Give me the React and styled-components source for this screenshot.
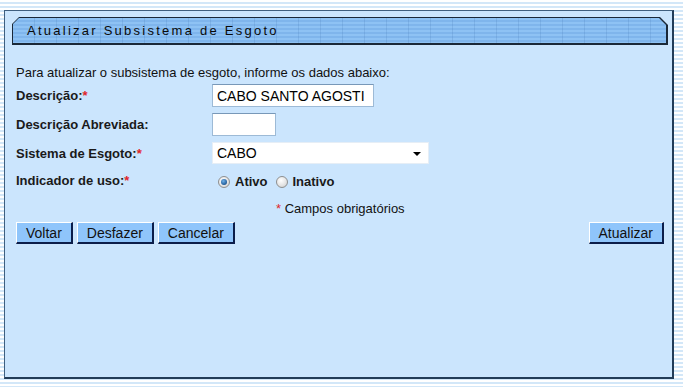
import React, { useState } from 'react';
import styled, { createGlobalStyle } from 'styled-components';

const Global = createGlobalStyle`
  html, body {
    margin: 0;
    padding: 0;
  }
  body {
    font-family: "Liberation Sans", Arial, sans-serif;
    background: repeating-linear-gradient(
      to bottom,
      #ffffff 0px,
      #ffffff 2px,
      #d3e7f8 2px,
      #d3e7f8 4px
    );
    min-height: 387px;
  }
`;

const Page = styled.div`
  padding: 10px 9px 8px 4px;
`;

const Panel = styled.div`
  box-sizing: border-box;
  height: 369px;
  background: #cbe5fd;
  border: 1px solid #3f5f7f;
  border-right: 2px solid #223c58;
  border-bottom: 2px solid #223c58;
  padding: 6px 4px 0 7px;
`;

const TitleFrame = styled.div`
  background: #1a2838;
  padding: 1px 2px 2px 1px;
  clip-path: polygon(7px 0, calc(100% - 8px) 0, 100% 8px, 100% 100%, 0 100%, 0 7px);
`;

const TitleBar = styled.div`
  height: 25px;
  display: flex;
  align-items: center;
  padding-left: 14px;
  font-size: 13px;
  letter-spacing: 2.25px;
  color: #0a0a0a;
  clip-path: polygon(6px 0, calc(100% - 7px) 0, 100% 7px, 100% 100%, 0 100%, 0 6px);
  background:
    repeating-linear-gradient(
      to right,
      transparent 0px,
      transparent 21px,
      rgba(60, 110, 170, 0.18) 21px,
      rgba(60, 110, 170, 0.18) 22px
    ),
    repeating-linear-gradient(
      to bottom,
      #8ec2f4 0px,
      #8ec2f4 2px,
      #7fb5ec 2px,
      #7fb5ec 4px
    );
`;

const Body = styled.div`
  padding: 20px 4px 0 4px;
  font-size: 13px;
  color: #111;
`;

const Intro = styled.div`
  line-height: 15px;
  margin-bottom: 4px;
`;

const Form = styled.div`
  display: grid;
  grid-template-columns: 196px 1fr;
  row-gap: 6px;
  align-items: center;
`;

const Label = styled.div`
  font-weight: bold;
  color: #1a1a1a;
  align-self: ${p => (p.top ? 'start' : 'center')};
  padding-top: ${p => (p.top ? '3px' : '0')};
`;

const Req = styled.span`
  color: #e0262a;
`;

const TextInput = styled.input`
  box-sizing: border-box;
  width: ${p => p.w}px;
  height: 23px;
  border: 1px solid #9dbad6;
  border-top-color: #7898b8;
  background: #fff;
  font-family: "Liberation Sans", Arial, sans-serif;
  font-size: 14px;
  color: #000;
  padding: 0 4px;
  outline: none;
`;

const Select = styled.div`
  box-sizing: border-box;
  width: 217px;
  height: 22px;
  background: #fff;
  border: 1px solid #e6eef6;
  display: flex;
  align-items: center;
  padding: 0 7px 0 4px;
  font-size: 14px;
  color: #000;
`;

const SelectText = styled.span`
  flex: 1;
`;

const Arrow = styled.span`
  width: 0;
  height: 0;
  border-left: 4px solid transparent;
  border-right: 4px solid transparent;
  border-top: 4px solid #000;
  margin-top: 2px;
`;

const RadioRow = styled.div`
  display: flex;
  align-items: center;
  padding: 4px 0 0 6px;
  font-size: 13px;
  font-weight: bold;
  color: #1a1a1a;
`;

const RadioOption = styled.label`
  display: flex;
  align-items: center;
  margin-right: 8px;
  cursor: pointer;
`;

const RadioDot = styled.span`
  box-sizing: border-box;
  width: 12px;
  height: 12px;
  border-radius: 50%;
  border: 1px solid #8e8f8f;
  background: radial-gradient(circle at 40% 35%, #ffffff 0%, #e2e2e2 60%, #c6c6c6 100%);
  margin-right: 5px;
  display: flex;
  align-items: center;
  justify-content: center;
  &::after {
    content: '';
    display: ${p => (p.on ? 'block' : 'none')};
    width: 6px;
    height: 6px;
    border-radius: 50%;
    background: radial-gradient(circle at 40% 35%, #6fb0e8 0%, #1f5b98 70%, #0f3566 100%);
  }
`;

const Note = styled.div`
  padding: 12px 0 0 260px;
  line-height: 15px;
`;

const Actions = styled.div`
  display: flex;
  gap: 4px;
  margin-top: 6px;
`;

const Button = styled.button`
  box-sizing: border-box;
  height: 22px;
  padding: 0 ${p => p.px || 9}px;
  background: #8fc5fb;
  border: 1px solid #fff;
  border-right: 2px solid #0b1d4a;
  border-bottom: 2px solid #0b1d4a;
  font-family: "Liberation Sans", Arial, sans-serif;
  font-size: 14px;
  color: #111;
  cursor: pointer;
  margin-left: ${p => (p.push ? 'auto' : '0')};
`;

export default function App() {
  const [uso, setUso] = useState('ativo');
  return (
    <>
      <Global />
      <Page>
        <Panel>
          <TitleFrame>
            <TitleBar>Atualizar Subsistema de Esgoto</TitleBar>
          </TitleFrame>
          <Body>
            <Intro>Para atualizar o subsistema de esgoto, informe os dados abaixo:</Intro>
            <Form>
              <Label>Descrição:<Req>*</Req></Label>
              <TextInput w={162} defaultValue="CABO SANTO AGOSTI" />
              <Label>Descrição Abreviada:</Label>
              <TextInput w={64} defaultValue="" />
              <Label>Sistema de Esgoto:<Req>*</Req></Label>
              <Select>
                <SelectText>CABO</SelectText>
                <Arrow />
              </Select>
              <Label top>Indicador de uso:<Req>*</Req></Label>
              <RadioRow>
                <RadioOption onClick={() => setUso('ativo')}>
                  <RadioDot on={uso === 'ativo' ? 1 : 0} />Ativo
                </RadioOption>
                <RadioOption onClick={() => setUso('inativo')}>
                  <RadioDot on={uso === 'inativo' ? 1 : 0} />Inativo
                </RadioOption>
              </RadioRow>
            </Form>
            <Note><Req>*</Req> Campos obrigatórios</Note>
            <Actions>
              <Button>Voltar</Button>
              <Button>Desfazer</Button>
              <Button>Cancelar</Button>
              <Button push px={9}>Atualizar</Button>
            </Actions>
          </Body>
        </Panel>
      </Page>
    </>
  );
}
